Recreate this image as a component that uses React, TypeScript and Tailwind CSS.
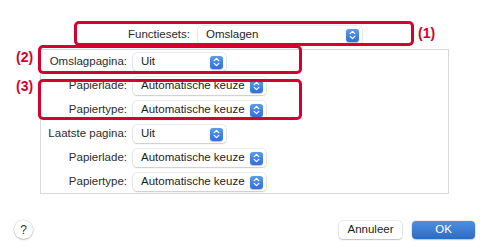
import React from "react";

const Stepper = () => (
    <span className="flex items-center justify-center w-[13px] h-[13px] rounded-[3px] bg-gradient-to-b from-[#5b9cf0] to-[#2f6fd2] shadow-[0_0.5px_1px_rgba(0,0,0,0.25)]">
        <svg width="7" height="10" viewBox="0 0 7 10" fill="none">
            <path
                d="M1.2 3.6 L3.5 1.4 L5.8 3.6"
                stroke="white"
                strokeWidth="1.3"
                strokeLinecap="round"
                strokeLinejoin="round"
            />
            <path
                d="M1.2 6.4 L3.5 8.6 L5.8 6.4"
                stroke="white"
                strokeWidth="1.3"
                strokeLinecap="round"
                strokeLinejoin="round"
            />
        </svg>
    </span>
);

const Popup = ({ value, width }: { value: string; width: string }) => (
    <div
        className={`${width} h-[18px] flex items-center justify-between pl-[8px] pr-[3px] bg-white rounded-[4px] shadow-[0_0_0_0.5px_rgba(0,0,0,0.14),0_1px_1.5px_rgba(0,0,0,0.14)] text-[#1d1d1d]`}
    >
        <span>{value}</span>
        <Stepper />
    </div>
);

const rows = [
    { label: "Omslagpagina:", value: "Uit", width: "w-[93px]" },
    { label: "Papierlade:", value: "Automatische keuze", width: "w-[133px]" },
    { label: "Papiertype:", value: "Automatische keuze", width: "w-[133px]" },
    { label: "Laatste pagina:", value: "Uit", width: "w-[93px]" },
    { label: "Papierlade:", value: "Automatische keuze", width: "w-[133px]" },
    { label: "Papiertype:", value: "Automatische keuze", width: "w-[133px]" },
];

export default function App() {
    return (
        <div
            className="relative w-[487px] h-[250px] bg-white flex flex-col text-[11.5px] text-[#2b2b2b]"
            style={{ fontFamily: '"Liberation Sans", Arial, sans-serif' }}
        >
            <div className="flex items-center pt-[26px]">
                <span className="w-[190px] text-right">Functiesets:</span>
                <div className="ml-[8px]">
                    <Popup value="Omslagen" width="w-[164px]" />
                </div>
            </div>

            <div className="mt-[5px] ml-[40px] w-[409px] h-[145px] border border-[#d9d9d9] flex flex-col">
                {rows.map((row, i) => (
                    <div key={i} className="flex items-center h-[24px] shrink-0">
                        <span className="w-[86px] text-right">{row.label}</span>
                        <div className="ml-[6px]">
                            <Popup value={row.value} width={row.width} />
                        </div>
                    </div>
                ))}
            </div>

            <div className="flex items-center mt-[26px] pl-[14px] pr-[12px]">
                <div className="w-[19px] h-[19px] rounded-full bg-white flex items-center justify-center text-[12px] text-[#333] shadow-[0_0_0_0.5px_rgba(0,0,0,0.15),0_1px_2px_rgba(0,0,0,0.2)]">
                    ?
                </div>
                <div className="ml-auto flex items-center gap-[10px]">
                    <button className="w-[63px] h-[18px] rounded-[4px] bg-white text-[#1d1d1d] shadow-[0_0_0_0.5px_rgba(0,0,0,0.15),0_1px_1.5px_rgba(0,0,0,0.18)]">
                        Annuleer
                    </button>
                    <button className="w-[63px] h-[18px] rounded-[4px] bg-gradient-to-b from-[#4f8fe2] to-[#2c6bc4] text-white shadow-[0_0_0_0.5px_rgba(0,0,0,0.12),0_1px_1.5px_rgba(0,0,0,0.18)]">
                        OK
                    </button>
                </div>
            </div>

            {/* annotation frames */}
            <div className="absolute left-[74px] top-[21px] w-[340px] h-[25px] border-[3px] border-[#d6002e] rounded-[5px]" />
            <div className="absolute left-[38px] top-[45px] w-[264px] h-[29px] border-[3px] border-[#d6002e] rounded-[5px]" />
            <div className="absolute left-[38px] top-[79px] w-[264px] h-[41px] border-[3px] border-[#d6002e] rounded-[5px]" />
            <span className="absolute left-[418px] top-[23px] text-[14px] font-bold text-[#d6002e]">(1)</span>
            <span className="absolute left-[16px] top-[47px] text-[14px] font-bold text-[#d6002e]">(2)</span>
            <span className="absolute left-[16px] top-[76px] text-[14px] font-bold text-[#d6002e]">(3)</span>
        </div>
    );
}
